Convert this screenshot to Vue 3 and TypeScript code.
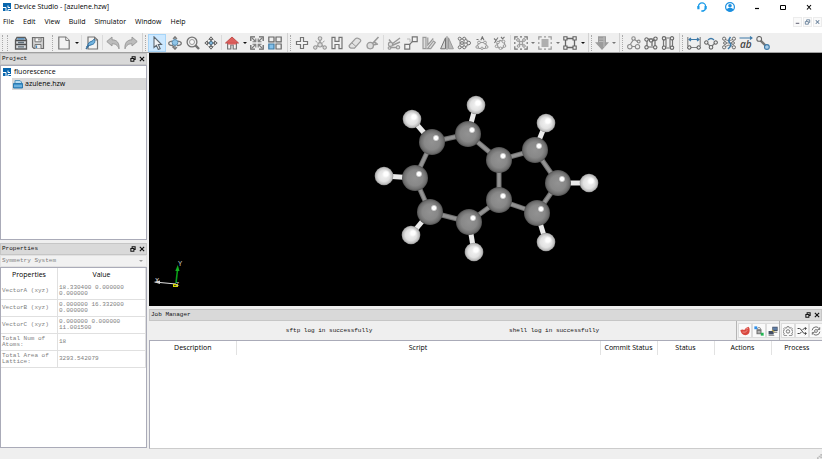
<script setup lang="ts">
import { ref } from 'vue'

interface Shape { d: string; s?: string; f?: string; w?: number }
interface Tool { kind: 'btn' | 'drop' | 'sep' | 'grip'; icon?: string; label?: string; active?: boolean }

const G = '#747474'
const L = '#9a9a9a'
const B = '#3f86bf'

const c = (x: number, y: number, r: number): string =>
  `M${x - r} ${y}a${r} ${r} 0 1 0 ${2 * r} 0a${r} ${r} 0 1 0 ${-2 * r} 0z`

const icons: Record<string, Shape[]> = {
  cabinet: [
    { d: 'M1.5 4L3 1.5h8L12.5 4v9h-11z', s: '#5c5c5c', f: '#d5d9dc', w: 1.3 },
    { d: 'M2 4.5h10M2 8.5h10', s: '#4c4c4c', w: 1.4 },
    { d: 'M4 6.5h6M4 10.8h6', s: '#5e6d78', w: 1.3 },
    { d: 'M3.5 2.9h7', s: B, w: 1.2 },
  ],
  save: [
    { d: 'M1.5 1.5h11v11h-9.5l-1.5-1.5z', s: '#6c6c6c', f: '#d4d4d4', w: 1.2 },
    { d: 'M4 1.8h6v4H4z', s: '#777', f: '#f8f8f8' },
    { d: 'M4 12.5V8.5h6v4', s: '#777', f: '#efefef' },
    { d: 'M8 2.5v2', s: '#555' },
    { d: 'M5.5 9.5v2.5', s: B, w: 1.2 },
  ],
  page: [{ d: 'M1.8 1h7l3.4 3.4V13H1.8z', s: G, f: '#f2f2f2', w: 1.2 }, { d: 'M8.8 1v3.4h3.4', s: G, f: '#fff' }],
  edit: [
    { d: 'M3 1h6.5l3 3v9H3z', s: G, f: '#f4f4f4', w: 1.2 },
    { d: 'M9.5 1v3h3', s: G },
    { d: 'M1.5 11c1.5-1 1.5-5 4.5-5.5c1.5-.3 2.5-1.5 3-2.5c1.500 2 1 4.500-1.500 5.500c-2 .5-3.500 1-6 2.500z', s: '#3477a8', f: '#72b3df' },
    { d: 'M1 13l3-4', s: '#3d6f99', w: 1.4 },
  ],
  undo: [{ d: 'M.8 5.500L6 1v2.800c5 0 7.500 3.200 7 9c-1.500-4-3.500-5-7-5V10z', s: L, f: '#bcbcbc' }],
  redo: [{ d: 'M13.200 5.500L8 1v2.800c-5 0-7.500 3.200-7 9c1.500-4 3.500-5 7-5V10z', s: L, f: '#bcbcbc' }],
  pointer: [{ d: 'M4 .8v10.700l2.400-2.200l1.900 4.200l1.900-.8l-1.900-4.200h3.200z', s: '#5d6770', f: '#f2f4f6', w: 1.1 }],
  orbit: [
    { d: 'M7 .8v12.400M5 2.800L7 .7l2 2.100M5 11.200L7 13.300l2-2.100', s: '#777', w: 1.2 },
    { d: 'M4 5.200C-.5 6-.5 9.200 5 9.600M10 5.200c4.500.8 4.500 4-1 4.400M4.500 7.500l2 2l-2 2', s: '#777', w: 1.3 },
    { d: c(7, 6.5, 2.9), s: '#5d8fb2', f: '#8fc5e8' },
  ],
  zoom: [
    { d: c(6, 6, 4.9), s: '#747474', f: '#eee', w: 1.3 },
    { d: c(6, 6, 2.5), s: L, f: '#fafafa' },
    { d: 'M9.700 9.700l3.300 3.300', s: '#747474', w: 2.4 },
  ],
  pan: [
    { d: 'M7 1.500v11M1.500 7h11', s: '#626262', w: 1.6 },
    { d: 'M4.800 3.400L7 .8l2.200 2.600zM4.800 10.600l2.200 2.600l2.200-2.600zM3.400 4.800L.8 7l2.600 2.200zM10.600 4.800l2.600 2.200l-2.600 2.200z', s: '#666', f: '#ddd' },
    { d: c(7, 7, 1.7), s: '#55788f', f: '#7fb6db' },
  ],
  home: [
    { d: 'M2.600 6.500V13h3.200V9h2.400v4h3.200V6.500', s: '#777', f: '#f4f4f4', w: 1.2 },
    { d: 'M.5 7L7 1L13.500 7z', s: '#c04f4c', f: '#dd5f5c' },
    { d: 'M3 6.500h8v2H3z', f: '#dd5f5c' },
  ],
  fit: [
    { d: 'M.8 5V.8H5M9 .8h4.200V5M13.200 9v4.200H9M5 13.200H.8V9', s: '#666', w: 1.3 },
    { d: 'M2 2l3 3M12 2L9 5M12 12L9 9M2 12L5 9M5.800 2.500v3.300H2.500M8.200 2.500v3.300h3.300M8.200 11.500V8.200h3.300M5.800 11.500V8.200H2.500', s: '#7c7c7c', w: 1.1 },
  ],
  grid: [
    { d: 'M.8 1h5.200v4.800H.8zM8 1h5.200v4.800H8zM8 8h5.200v5H8z', s: '#666', f: '#eee', w: 1.2 },
    { d: 'M.8 8h5.200v5H.8z', s: '#3f7aa4', f: '#83c0ea', w: 1.2 },
  ],
  plus: [{ d: 'M5.500 1.500h3v4h4v3h-4v4h-3v-4h-4v-3h4z', s: G, f: '#f4f4f4', w: 1.2 }],
  molecule: [
    { d: 'M7 3v6M5 9.500l-3 2M9 9.500l3 2', s: L, w: 1.5 },
    { d: c(7, 2.5, 1.8) + c(7, 8.8, 2.2) + c(2.3, 11.5, 1.7) + c(11.7, 11.5, 1.7), s: L, f: '#ddd', w: 1.1 },
    { d: 'M2.500 5l2 1.500M11.500 5l-2 1.500', s: L },
  ],
  hydrogen: [{ d: 'M2 1.300h3v4h4v-4h3v11.400H9V8.500H5v4.200H2z', s: G, f: '#f0f0f0', w: 1.2 }],
  eraser: [
    { d: 'M1.200 9.500l6.300-6.800q1-1 2.500-.5l2.300 1.400q1 .8 0 2L6.500 12.200H3q-2.300-1-1.800-2.700z', s: L, f: '#e2e2e2', w: 1.2 },
    { d: 'M4 7l4 3.500', s: L },
  ],
  brush: [
    { d: c(4.2, 9.6, 3.2), s: L, f: '#ddd', w: 1.3 },
    { d: 'M6.500 7.500L12.500 1M7 9l5-1M8 6l2.500 1.500', s: L, w: 1.6 },
  ],
  cut: [
    { d: 'M5 8L13 2M5 9.500L13 6M4 6L2 3.500M4 11.500h7', s: L, w: 1.4 },
    { d: c(3.5, 8.2, 2.1) + c(2.5, 12, 1.3) + c(11, 11.3, 1.7), s: L, f: '#e0e0e0', w: 1.1 },
  ],
  link: [
    { d: 'M.8 8.300h4.900v4.900H.8zM8.300.8h4.900v4.900H8.300z', s: G, f: '#f2f2f2', w: 1.2 },
    { d: 'M5.700 8.300l2.600-2.600', s: G, w: 1.2 },
    { d: 'M3 3h3v3', s: '#b8b8b8' },
  ],
  plane: [
    { d: 'M1 1.300h3v11.400H1zM5.500 12.700l6-7.700l1.800 1.400l-4.600 6.300z', s: L, f: '#dedede', w: 1.2 },
    { d: 'M5.800 1.500V9l5.500-6.500', s: L, w: 1.2 },
  ],
  mirror: [
    { d: 'M5.500 1.800v11H.6z', s: G, f: '#d4d4d4' },
    { d: 'M8.500 1.800v11h4.900z', s: L, f: '#bababa' },
    { d: 'M7 .3v13.400', s: G },
  ],
  branch: [
    { d: 'M3 3h6M3 7h8M3 11h6M3 3v8M7 3v8M9 3l3 4l-3 4', s: L, w: 1.3 },
    { d: c(2.7, 2.7, 1.5) + c(7.2, 2.7, 1.5) + c(2.7, 11.3, 1.5) + c(7.2, 11.3, 1.5) + c(11.7, 7, 1.8) + c(5, 7, 1.4), s: G, f: '#eee' },
  ],
  ring: [
    { d: 'M2 10.500l2-4h6l2 4l-2 2H4z', s: L, w: 1.2 },
    { d: c(4, 6.5, 1.4) + c(10, 6.5, 1.4) + c(2.2, 11, 1.3) + c(11.7, 11, 1.3) + c(7, 12.3, 1.2), s: L, f: '#eee' },
    { d: 'M5.800 4.200L7.300.8L9 4.200M1.500 3.500h2', s: G, w: 1.1 },
  ],
  ring2: [
    { d: 'M4 7.500l3-3l4 1l1 4l-3 3l-4-1z', s: L, w: 1.2 },
    { d: c(5, 6.5, 1.3) + c(10.5, 5.5, 1.4) + c(11.5, 10, 1.3) + c(7.5, 12.3, 1.3) + c(3.5, 10.3, 1.3), s: L, f: '#eee' },
    { d: 'M1 2.500l2 2l2-3M3 4.500L1.500 7M8 .8l1.500 2L11.500.8', s: G, w: 1.1 },
  ],
  select1: [
    { d: 'M.8 3.800v-3h3M6 .8h2M10.200.8h3v3M13.200 6v2M13.200 10.200v3h-3M8 13.200H6M3.800 13.200h-3v-3M.8 8V6', s: G, w: 1.2 },
    { d: 'M4 4l6 6M10 4l-6 6', s: L, w: 1.2 },
    { d: c(4, 4, 1.4) + c(10, 4, 1.4) + c(7, 7, 1.8) + c(4.5, 10, 1.3) + c(10, 10, 1.3), s: L, f: '#dcdcdc' },
  ],
  select2: [
    { d: 'M.8 3.800v-3h3M6 .8h2M10.200.8h3v3M13.200 6v2M13.200 10.200v3h-3M8 13.200H6M3.800 13.200h-3v-3M.8 8V6', s: L, w: 1.2 },
    { d: 'M3.500 4h7M3.500 6h7M3.500 8h7M3.500 10h7', s: L, w: 1.5 },
  ],
  cell: [
    { d: 'M2.500 2.500h9v9h-9z', s: '#666', w: 1.3 },
    { d: 'M.8.8h3.200v3.200H.8zM10 .8h3.200v3.200H10zM.8 10h3.200v3.200H.8zM10 10h3.200v3.200H10z', s: '#606060', f: '#eee', w: 1.1 },
  ],
  down: [
    { d: 'M3 .3h8v6h3L7 14L0 6.300h3z', f: '#9c9c9c' },
    { d: 'M4 3h6M4 5.500h6', s: '#bcbcbc' },
    { d: 'M9 1v10', s: '#b4b4b4', w: 1.5 },
  ],
  chain1: [
    { d: 'M3 10.500h7M3.500 8L7 3l4 3', s: '#8a8a8a', w: 1.2 },
    { d: c(2.8, 10.7, 2.2) + c(10.5, 10.7, 2.2) + c(6.5, 2.5, 1.7) + c(11.7, 5.5, 1.4), s: '#8a8a8a', f: '#eee', w: 1.1 },
  ],
  chain2: [
    { d: 'M3 3h8v8H3zM4 3l4 3l3-3M8 6v4', s: '#666', w: 1.2 },
    { d: c(2.5, 11.3, 1.7) + c(11.2, 11.3, 1.7) + c(2.5, 3.5, 1.7) + c(11.5, 2.7, 1.7) + c(7, 4.5, 1.6), s: '#6b6b6b', f: '#eee', w: 1.1 },
  ],
  chain3: [
    { d: 'M2.500 3v8M5 3v8M9 3v8M11.500 3v8M4 2h6M4 12h6', s: '#777', w: 1.2 },
    { d: c(3, 2.3, 1.7) + c(11, 2.3, 1.7) + c(3, 11.7, 1.7) + c(11, 11.7, 1.7), s: '#666', f: '#eee', w: 1.1 },
  ],
  distance: [
    { d: 'M1.500 3.500h11M4 2L2 3.500L4 5M10 2l2 1.500L10 5', s: '#3d79a8', w: 1.2 },
    { d: 'M.8 1v9M13.200 1v9M2 11.500h10', s: '#808080', w: 1.1 },
    { d: c(2.3, 11.5, 1.7) + c(11.7, 11.5, 1.7), s: '#606060', f: '#eee', w: 1.1 },
  ],
  angle: [
    { d: 'M2.500 6.500L7 11l4.500-4.500', s: '#808080', w: 1.3 },
    { d: c(2.3, 6.5, 1.7) + c(11.7, 6.5, 1.7) + c(7, 11.3, 1.8), s: '#666', f: '#eee', w: 1.1 },
    { d: 'M4 4q3-3 6 0', s: '#3d79a8', w: 1.3 },
  ],
  torsion: [
    { d: 'M2 3l5 2l5-2M2 11l5-2l5 2M3 7h8', s: '#8a8a8a', w: 1.1 },
    { d: c(2.1, 2.7, 1.6) + c(11.9, 2.7, 1.6) + c(2.1, 11.3, 1.6) + c(11.9, 11.3, 1.6) + c(3, 7, 1.4) + c(11, 7, 1.4), s: '#6c6c6c', f: '#eee' },
    { d: 'M8.500 1Q5.500 5 8 7T6 13', s: '#3d79a8', w: 1.5 },
  ],
  label: [{ d: 'M.5 2h12.500M11 .5L13 2l-2 1.500', s: '#3d79a8', w: 1.1 }],
  bond: [
    { d: 'M4 4l6 6', s: '#777', w: 2.4 },
    { d: c(3.2, 2.9, 2.4), s: '#666', f: '#eee', w: 1.1 },
    { d: c(10.9, 11, 2.4), s: '#3d79a8', f: '#a9cde8', w: 1.1 },
  ],
  whale: [
    { d: 'M.5 5.500q3-1 5.500 0q1.500-3.500 6-4.500q2 2 1.500 6q-.5 5.500-6 5.800Q1.500 12.500.5 5.500z', f: '#d9483f' },
    { d: 'M3.500 8.500q4 1.500 7-2.500M8 4.500l3.500-1.500', s: '#f3aaa5' },
  ],
  server: [
    { d: 'M3.500 4.500h7v7h-7z', f: '#707070' },
    { d: 'M5 4.500V3q2-2 4 0v1.500', s: '#888', w: 1.3 },
    { d: 'M.5.5h4v4h-4z', f: '#2f90ea' },
    { d: 'M9.500 9.500h4v4h-4z', f: '#22b552' },
    { d: 'M5 7.500h4M5 9.500h4', s: '#e5e5e5' },
  ],
  terminal: [
    { d: 'M6 1h7.500v6H6zM.8 7H8v5H.8z', f: '#434e63' },
    { d: 'M7 2h5.500v3.500H7z', f: '#5f7fa8' },
    { d: 'M8 8h5v1.500H8zM.8 12.500h8v1.200h-8z', f: '#777' },
    { d: 'M5.500 5.500l3.500 3', s: '#c6ae43', w: 1.5 },
  ],
  gear: [
    { d: 'M5.800.8h2.400l.5 1.800l1.200.5l1.600-.9l1.600 1.700l-.9 1.500l.5 1.200l1.500.5v2l-1.500.5l-.5 1.200l.9 1.500l-1.600 1.700l-1.600-.9l-1.200.5l-.5 1.600H5.800l-.5-1.600l-1.200-.5l-1.600.9L.9 12.300l.9-1.500l-.5-1.200L0 9.100v-2l1.300-.5l.5-1.200L.9 3.900l1.600-1.700l1.600.9l1.200-.5z', s: '#666', w: 1.1 },
    { d: c(7, 7.6, 2.4), s: '#666', w: 1.2 },
  ],
  shuffle: [{ d: 'M.8 3.500h2.700q1.500 0 3.500 3.500t3.500 3.500H13M.8 10.500h2.700q1.500 0 2.500-2M8 5.500q1-2 2.500-2H13M11 1.500l2 2l-2 2M11 8.500l2 2l-2 2', s: '#444', w: 1.4 }],
  refresh: [
    { d: 'M1.500 6Q2.500 1.200 7 1.200q3 0 4.800 3M12.500 8Q11.500 12.800 7 12.800q-3 0-4.800-3M9 5h3.200V1.800M5 9H1.800v3.200', s: '#666', w: 1.3 },
    { d: c(7, 7, 2), s: '#666', w: 1.2 },
  ],
}

const b = (icon: string, label: string, active = false): Tool => ({ kind: 'btn', icon, label, active })
const drop: Tool = { kind: 'drop', label: 'More options' }
const sep: Tool = { kind: 'sep' }
const grip: Tool = { kind: 'grip' }

const groups: Tool[][] = [
  [grip, grip, b('cabinet', 'Open project'), b('save', 'Save')],
  [grip, b('page', 'New'), drop, sep, b('edit', 'Edit structure'), sep, b('undo', 'Undo'), b('redo', 'Redo')],
  [grip, b('pointer', 'Select', true), b('orbit', 'Rotate'), b('zoom', 'Zoom'), b('pan', 'Pan'), sep, b('home', 'Home view'), drop, b('fit', 'Fit'), b('grid', 'Views')],
  [grip, b('plus', 'Add atom'), b('molecule', 'Add fragment'), b('hydrogen', 'Add hydrogen'), b('eraser', 'Erase'), b('brush', 'Clean'), sep,
    b('cut', 'Cut bond'), b('link', 'Align'), b('plane', 'Plane'), b('mirror', 'Mirror'), b('branch', 'Branch'), b('ring', 'Rotate fragment'), b('ring2', 'Convert'), sep,
    b('select1', 'Select atoms'), drop, b('select2', 'Select layers'), drop, b('cell', 'Lattice'), drop],
  [grip, b('down', 'Import'), drop],
  [grip, b('chain1', 'Molecule'), b('chain2', 'Crystal'), b('chain3', 'Device')],
  [grip, b('distance', 'Distance'), b('angle', 'Angle'), b('torsion', 'Torsion'), b('label', 'Vector'), b('bond', 'Bond')],
]

const menus = ['File', 'Edit', 'View', 'Build', 'Simulator', 'Window', 'Help']

const system = ref('Symmetry System')
const properties = [
  ['VectorA (xyz)', '18.330400 0.000000 0.000000'],
  ['VectorB (xyz)', '0.000000 16.332000 0.000000'],
  ['VectorC (xyz)', '0.000000 0.000000 11.001500'],
  ['Total Num of Atoms:', '18'],
  ['Total Area of Lattice:', '3293.542079'],
]

const carbons: [number, number][] = [
  [432, 142], [468, 134], [499, 160], [499, 200], [469, 222], [430, 212], [415, 178], [535, 150], [558, 183], [537, 213],
]
const hydrogens: [number, number, number][] = [
  [412, 119, 0], [476, 105, 1], [546, 123, 7], [589, 183, 8], [546, 242, 9], [474, 252, 4], [411, 235, 5], [384, 176, 6],
]
const bonds: [number, number][] = [[0, 1], [1, 2], [2, 3], [3, 4], [4, 5], [5, 6], [6, 0], [2, 7], [7, 8], [8, 9], [9, 3]]

const remote = [['whale', 'Queue'], ['server', 'Secure transfer'], ['terminal', 'Terminal']]
const actions = [['gear', 'Settings'], ['shuffle', 'Shuffle'], ['refresh', 'Refresh']]
const jobColumns = ['Description', 'Script', 'Commit Status', 'Status', 'Actions', 'Process']
</script>

<template>
  <div class="studio">
    <header class="titlebar">
      <svg class="logo" viewBox="0 0 8 8"><path d="M0 0h8v8H0z" fill="#0765ad" /><path d="M0 4.500h3V8M5 2.500v2h2M5 8V6.500h3" stroke="#fff" fill="none" /></svg>
      <span class="caption">Device Studio - [azulene.hzw]</span>
      <button class="round" aria-label="Support">
        <svg viewBox="0 0 10 10"><path d="M1.400 6V4.500a3.600 3.600 0 0 1 7.200 0V6q0 2.500-3 3" fill="none" stroke="#1a9be8" stroke-width="1.200" /><path d="M.3 4h2.200v3.200H.3zM7.500 4h2.200v3.200H7.500zM4.300 8.200h2.400v1.500H4.300z" fill="#1a9be8" /></svg>
      </button>
      <button class="round" aria-label="Account">
        <svg viewBox="0 0 10 10"><circle cx="5" cy="5" r="4.400" fill="#fff" stroke="#1a8fe0" stroke-width="1.200" /><circle cx="5" cy="3.800" r="1.800" fill="#1a8fe0" /><path d="M1.500 8q.7-2.200 3.500-2.200T8.500 8Q5 11 1.500 8z" fill="#1a8fe0" /></svg>
      </button>
      <button class="win" aria-label="Minimize"><svg viewBox="0 0 8 8"><path d="M2 5.500h4" stroke="#000" stroke-width="1.200" fill="none" /></svg></button>
      <button class="win" aria-label="Maximize"><svg viewBox="0 0 8 8"><path d="M1.500 2.500h5v4h-5z" stroke="#000" fill="none" /></svg></button>
      <button class="win" aria-label="Close"><svg viewBox="0 0 8 8"><path d="M2 2l4 4.500M6 2L2 6.500" stroke="#000" stroke-width="1.100" fill="none" /></svg></button>
    </header>

    <nav class="menubar">
      <button v-for="m in menus" :key="m" class="menu">{{ m }}</button>
      <span class="mdi">
        <button aria-label="Minimize document"><svg viewBox="0 0 8 8"><path d="M2 5.500h4" stroke="#667" stroke-width="1.200" fill="none" /></svg></button>
        <button aria-label="Restore document"><svg viewBox="0 0 8 8"><path d="M3 3V1.500h3.500V4.500H5.500M1.500 3.500H5v3H1.500z" stroke="#667f99" fill="none" /></svg></button>
        <button aria-label="Close document"><svg viewBox="0 0 8 8"><path d="M2 2l4 4M6 2L2 6" stroke="#667f99" stroke-width="1.200" fill="none" /></svg></button>
      </span>
    </nav>

    <div class="toolbar">
      <div v-for="(g, gi) in groups" :key="gi" class="group">
        <template v-for="(t, ti) in g" :key="ti">
          <span v-if="t.kind === 'grip'" class="grip"></span>
          <span v-else-if="t.kind === 'sep'" class="sep"></span>
          <button v-else-if="t.kind === 'drop'" class="drop" :class="{ faded: gi === 4 || (gi === 3 && ti < 19) }" :aria-label="t.label"></button>
          <button v-else class="tool" :class="{ active: t.active }" :aria-label="t.label">
            <svg viewBox="0 0 14 14">
              <path v-for="(p, pi) in icons[t.icon!]" :key="pi" :d="p.d" :stroke="p.s ?? 'none'" :fill="p.f ?? 'none'" :stroke-width="p.w ?? 1" />
              <text v-if="t.icon === 'label'" x="1" y="12" class="vector">ab</text>
            </svg>
          </button>
        </template>
      </div>
    </div>

    <div class="workspace">
      <aside class="side">
        <section class="dock project">
          <h2 class="dock-title"><span>Project</span>
            <button aria-label="Float Project"><svg viewBox="0 0 7 7"><path d="M2.500 2.500V1H6v3H5M1 3h3.500v3H1z" stroke="#111" stroke-width="1.200" fill="none" /></svg></button>
            <button aria-label="Close Project"><svg viewBox="0 0 7 7"><path d="M1 1l5 5M6 1L1 6" stroke="#111" stroke-width="1.300" fill="none" /></svg></button>
          </h2>
          <ul class="tree">
            <li><svg class="logo" viewBox="0 0 8 8"><path d="M0 0h8v8H0z" fill="#0765ad" /><path d="M0 4.500h3V8M5 2.500v2h2M5 8V6.500h3" stroke="#fff" fill="none" /></svg>fluorescence</li>
            <li class="child"><svg class="file" viewBox="0 0 10 9"><path d="M2 3.500V.5h5l1.500 1.500v1.500" fill="#b9ddf3" stroke="#5596bd" /><path d="M.5 3.500h9V8h-9z" fill="#3f94cd" stroke="#2c7ab0" /><path d="M2 5v2M4 5v2M6 5v2M8 5v2" stroke="#9dcdea" /></svg>azulene.hzw</li>
          </ul>
        </section>

        <section class="dock props">
          <h2 class="dock-title"><span>Properties</span>
            <button aria-label="Float Properties"><svg viewBox="0 0 7 7"><path d="M2.500 2.500V1H6v3H5M1 3h3.500v3H1z" stroke="#111" stroke-width="1.200" fill="none" /></svg></button>
            <button aria-label="Close Properties"><svg viewBox="0 0 7 7"><path d="M1 1l5 5M6 1L1 6" stroke="#111" stroke-width="1.300" fill="none" /></svg></button>
          </h2>
          <div class="picker">
            <select v-model="system" aria-label="Property group"><option>Symmetry System</option></select>
          </div>
          <div class="prop-box">
            <table class="prop-table">
              <thead><tr><th>Properties</th><th>Value</th></tr></thead>
              <tbody>
                <tr v-for="p in properties" :key="p[0]"><td>{{ p[0] }}</td><td>{{ p[1] }}</td></tr>
              </tbody>
            </table>
          </div>
        </section>
      </aside>

      <main class="main">
        <div class="viewport">
          <svg viewBox="149 53 673 253" role="img" aria-label="Azulene molecule">
            <defs>
              <radialGradient id="carbon">
                <stop offset="0" stop-color="#929292" /><stop offset="0.6" stop-color="#888" /><stop offset="0.87" stop-color="#6e6e6e" /><stop offset="1" stop-color="#505050" />
              </radialGradient>
              <radialGradient id="hydrogen">
                <stop offset="0" stop-color="#f2f2f2" /><stop offset="0.6" stop-color="#e2e2e2" /><stop offset="0.88" stop-color="#bcbcbc" /><stop offset="1" stop-color="#8a8a8a" />
              </radialGradient>
              <radialGradient id="shine">
                <stop offset="0" stop-color="#fff" /><stop offset="0.5" stop-color="#fff" /><stop offset="1" stop-color="#fff" stop-opacity="0" />
              </radialGradient>
            </defs>
            <g v-for="(k, i) in bonds" :key="'b' + i">
              <line :x1="carbons[k[0]][0]" :y1="carbons[k[0]][1]" :x2="carbons[k[1]][0]" :y2="carbons[k[1]][1]" stroke="#707070" stroke-width="5" />
              <line :x1="carbons[k[0]][0]" :y1="carbons[k[0]][1]" :x2="carbons[k[1]][0]" :y2="carbons[k[1]][1]" stroke="#929292" stroke-width="3" />
            </g>
            <line v-for="(h, i) in hydrogens" :key="'l' + i" :x1="h[0]" :y1="h[1]" :x2="carbons[h[2]][0]" :y2="carbons[h[2]][1]" stroke="#ebebeb" stroke-width="5" />
            <g v-for="(a, i) in carbons" :key="'c' + i">
              <circle :cx="a[0]" :cy="a[1]" r="13" fill="url(#carbon)" />
              <circle :cx="a[0] + 4" :cy="a[1] - 4" r="3.500" fill="url(#shine)" />
            </g>
            <g v-for="(h, i) in hydrogens" :key="'h' + i">
              <circle :cx="h[0]" :cy="h[1]" r="9.300" fill="url(#hydrogen)" />
              <circle :cx="h[0] + 2" :cy="h[1] - 2" r="4" fill="url(#shine)" />
            </g>
            <path d="M176 283L177.500 270" stroke="#0a9f18" stroke-width="1.600" />
            <path d="M175.300 271L177.800 265L179.500 271z" fill="#13b021" />
            <path d="M176 284L160 282.500" stroke="#ddd" stroke-width="1.200" />
            <path d="M153.500 282L160 280.500V284z" fill="#ddd" />
            <path d="M173 284h5v3h-5z" fill="#d6d600" /><path d="M174 285.500h3" stroke="#555500" stroke-width="1" />
            <text x="178" y="266" class="axis">Y</text>
            <text x="155" y="283" class="axis">X</text>
            <text x="176" y="286" class="axis small">Z</text>
          </svg>
        </div>

        <section class="jobs">
          <h2 class="dock-title"><span>Job Manager</span>
            <button aria-label="Float Job Manager"><svg viewBox="0 0 7 7"><path d="M2.500 2.500V1H6v3H5M1 3h3.500v3H1z" stroke="#111" stroke-width="1.200" fill="none" /></svg></button>
            <button aria-label="Close Job Manager"><svg viewBox="0 0 7 7"><path d="M1 1l5 5M6 1L1 6" stroke="#111" stroke-width="1.300" fill="none" /></svg></button>
          </h2>
          <div class="job-bar">
            <div class="logs"><span>sftp log in successfully</span><span>shell log in successfully</span></div>
            <div v-for="(set, si) in [remote, actions]" :key="si" class="job-tools">
              <button v-for="a in set" :key="a[0]" :aria-label="a[1]">
                <svg viewBox="0 0 14 14"><path v-for="(p, pi) in icons[a[0]]" :key="pi" :d="p.d" :stroke="p.s ?? 'none'" :fill="p.f ?? 'none'" :stroke-width="p.w ?? 1" /></svg>
              </button>
            </div>
          </div>
          <div class="job-box">
            <table class="job-table">
              <colgroup><col class="c-desc"><col><col class="c-std"><col class="c-std"><col class="c-std"><col class="c-last"></colgroup>
              <thead><tr><th v-for="h in jobColumns" :key="h">{{ h }}</th></tr></thead>
            </table>
          </div>
        </section>
      </main>
    </div>

    <footer class="status"><svg viewBox="0 0 6 6"><path d="M4 0h2v2H4zM2 2h2v2H2zM4 3h2v2H4zM0 4h2v2H0z" fill="#bbb" /></svg></footer>
  </div>
</template>

<style>
html, body, #app { height: 100%; }
body { margin: 0; overflow: hidden; }
</style>

<style scoped>
.studio {
  display: flex;
  flex-direction: column;
  height: 100%;
  background: #efefef;
  color: #000;
  font-family: 'Open Sans', 'Noto Sans', sans-serif;
  font-size: 7px;
  line-height: 10px;
}
button { border: 0; padding: 0; margin: 0; background: none; color: inherit; font: inherit; }
svg { display: block; }

.titlebar { display: flex; align-items: center; height: 13px; padding: 0 9px 0 3px; background: #fff; }
.logo { width: 8px; height: 8px; flex: none; margin-right: 3px; }
.caption { flex: 1; }
.round { width: 10px; margin-right: 18px; }
.round svg { width: 10px; height: 10px; }
.win { width: 8px; margin-left: 18px; }
.round + .win { margin-left: 0; }
.win svg { width: 8px; height: 8px; }

.menubar { display: flex; align-items: center; gap: 9px; height: 20px; padding-left: 3px; box-sizing: border-box; padding-bottom: 2px; background: #fff; }
.mdi { display: flex; gap: 1px; margin-left: auto; }
.mdi button { width: 9px; height: 10px; background: #fafafa; border: 1px solid #ececec; }
.mdi svg { width: 7px; height: 8px; }

.toolbar {
  display: grid;
  grid-template-columns: 50px 93px 145px 301px 31px 60px 95px;
  height: 19px;
  border-bottom: 1px solid #a0a0a0;
  background: #efefef;
}
.group { display: flex; align-items: center; box-sizing: border-box; padding-right: 2px; border-right: 1px solid #d2d2d2; min-width: 0; }
.group:nth-child(1), .group:last-child { border-right-color: transparent; }
.grip { flex: none; width: 1px; height: 16px; margin: 0 2px; border-left: 1px dotted #aaa; box-sizing: border-box; }
.grip + .grip { margin-right: 4px; }
.sep { flex: none; width: 1px; height: 15px; margin: 0 1px; background: #dadada; }
.tool { flex: 0 1 18px; min-width: 0; height: 18px; display: flex; align-items: center; justify-content: center; }
.tool.active { background: #cce8ff; box-shadow: inset 0 0 0 1px #a6d4f7; }
.tool svg { width: 14px; height: 14px; flex: none; }
.vector { font: italic 600 10px 'Open Sans', sans-serif; fill: #444; }
.drop { flex: none; width: 7px; height: 18px; display: flex; align-items: center; justify-content: center; }
.drop::before { content: ''; border: 2px solid transparent; border-top-color: #111; border-bottom: 0; }
.drop.faded::before { border-top-color: #777; }

.workspace { flex: 1; min-height: 0; display: grid; grid-template-columns: 147px 1fr; gap: 2px; }
.side { display: flex; flex-direction: column; gap: 3px; min-height: 0; padding-bottom: 1px; }
.dock { display: flex; flex-direction: column; min-height: 0; }
.project { flex: 187 1 0; }
.props { flex: 206 1 0; }
.dock-title {
  display: flex;
  align-items: center;
  gap: 3px;
  flex: none;
  box-sizing: border-box;
  height: 12px;
  margin: 0;
  padding: 0 1px;
  border: 1px solid #c6c6c6;
  background: #d9d9d9;
  color: #111;
  font: 6px/10px 'Liberation Mono', monospace;
}
.dock-title span { flex: 1; }
.dock-title svg { width: 6px; height: 6px; }
.tree { flex: 1; margin: 0; padding: 0; list-style: none; background: #fff; border: 1px solid #aaabb8; }
.tree li { display: flex; align-items: center; height: 12px; padding-left: 2px; }
.tree .child { margin-left: 11px; padding-left: 1px; background: #d9d9d9; }
.file { width: 10px; height: 9px; margin-right: 2px; }

.picker { position: relative; height: 12px; }
.picker select {
  display: block;
  width: 100%;
  height: 12px;
  padding: 0 1px;
  border: 1px solid #e2e2e2;
  border-radius: 0;
  appearance: none;
  background: #f1f1f1;
  color: #808080;
  font: 6px/10px 'Liberation Mono', monospace;
}
.picker::after { content: ''; position: absolute; right: 4px; top: 5px; border: 2px solid transparent; border-top-color: #999; border-bottom: 0; }
.prop-box { flex: 1; background: #fff; border: 1px solid #aaabb8; }
.prop-table { width: 100%; border-collapse: collapse; table-layout: fixed; }
.prop-table th { height: 15px; padding: 0; font-weight: 400; font-size: 7px; border-right: 1px solid #e0e0e0; }
.prop-table th:first-child { width: 56px; }
.prop-table td {
  height: 16px;
  padding: 0 1px;
  border-right: 1px solid #e0e0e0;
  border-bottom: 1px solid #e0e0e0;
  color: #808080;
  font: 6px/6px 'Liberation Mono', monospace;
}

.main { display: flex; flex-direction: column; min-width: 0; min-height: 0; }
.viewport { flex: 253 1 0; min-height: 0; background: #000; }
.viewport svg { width: 100%; height: 100%; }
.axis { font: 7px 'Liberation Mono', monospace; fill: #ccc; }
.axis.small { font-size: 5px; }
.jobs { flex: 140 1 0; min-height: 0; display: flex; flex-direction: column; margin-top: 3px; }
.job-bar { display: flex; flex: none; height: 19px; align-items: stretch; }
.logs { flex: 1; display: flex; align-items: center; justify-content: space-evenly; font: 6px/10px 'Liberation Mono', monospace; color: #111; }
.job-tools { display: flex; align-items: center; gap: 2px; padding: 0 0 0 2px; border-left: 1px solid #b5b5b5; }
.job-tools button { display: flex; align-items: center; justify-content: center; width: 12px; height: 13px; background: #fafafa; box-shadow: 0 0 0 1px #ddd; }
.job-tools svg { width: 10px; height: 10px; }
.job-box { flex: 1; background: #fff; border: 1px solid #aaabb8; border-bottom-color: #ccc; border-right: 0; }
.job-table { width: 100%; border-collapse: collapse; table-layout: fixed; }
.job-table th { height: 14px; padding: 0; font-weight: 400; white-space: nowrap; border-right: 1px solid #e2e2e2; }
.job-table th:last-child { border-right: 0; }
.c-desc { width: 86px; }
.c-std { width: 57px; }
.c-last { width: 51px; }

.status { display: flex; justify-content: flex-end; align-items: flex-end; height: 10px; }
.status svg { width: 5px; height: 5px; }
</style>
